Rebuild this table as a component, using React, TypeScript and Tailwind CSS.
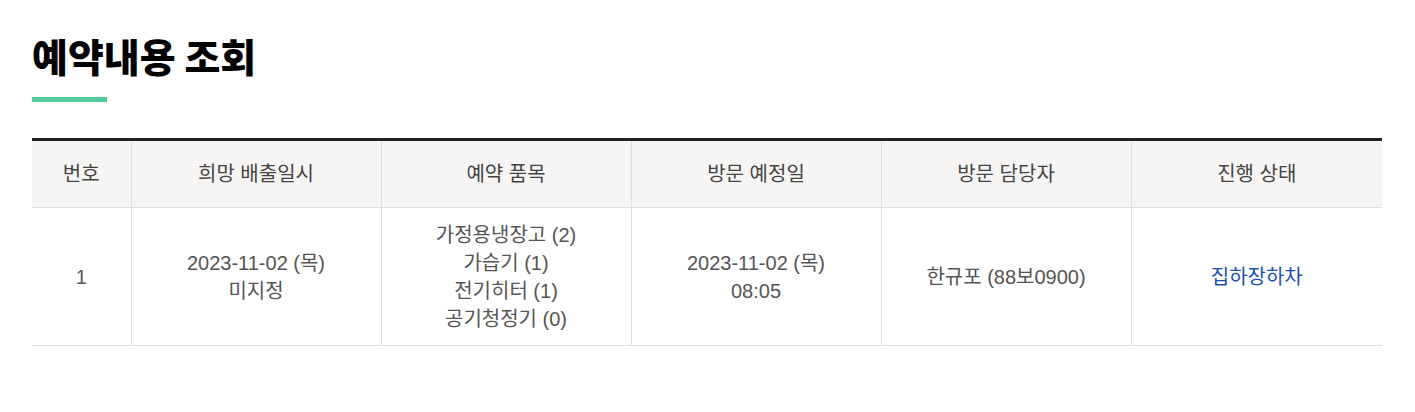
const columns = ['번호', '희망 배출일시', '예약 품목', '방문 예정일', '방문 담당자', '진행 상태'];

const items = ['가정용냉장고 (2)', '가습기 (1)', '전기히터 (1)', '공기청정기 (0)'];

const App = () => {
  return (
    <div
      className="min-h-screen bg-white px-8 pt-[29px]"
      style={{ fontFamily: '"Liberation Sans", "Noto Sans CJK KR", sans-serif' }}
    >
      <h2
        className="text-[39px] leading-[52px] font-black text-black"
        style={{ fontFamily: '"Noto Sans CJK KR", sans-serif' }}
      >
        예약내용 조회
      </h2>
      <div className="mt-[16px] h-[5px] w-[75px] bg-[#52cc9a]" />

      <table className="mt-[36px] w-[1350px] table-fixed border-collapse border-t-[3px] border-[#222] text-[20px]">
        <colgroup>
          <col className="w-[99px]" />
          <col className="w-[250px]" />
          <col className="w-[250px]" />
          <col className="w-[250px]" />
          <col className="w-[250px]" />
          <col className="w-[251px]" />
        </colgroup>
        <thead>
          <tr className="bg-[#f6f5f3] h-[68px]">
            {columns.map((c, i) => (
              <th
                key={c}
                className={`font-normal text-[#444] border-b border-[#ddd] ${i > 0 ? 'border-l' : ''}`}
              >
                {c}
              </th>
            ))}
          </tr>
        </thead>
        <tbody>
          <tr className="h-[138px] text-[#555] text-center leading-[28px]">
            <td className="border-b border-[#ddd]">1</td>
            <td className="border-b border-l border-[#ddd]">
              2023-11-02 (목)
              <br />
              미지정
            </td>
            <td className="border-b border-l border-[#ddd]">
              {items.map((it) => (
                <div key={it}>{it}</div>
              ))}
            </td>
            <td className="border-b border-l border-[#ddd]">
              2023-11-02 (목)
              <br />
              08:05
            </td>
            <td className="border-b border-l border-[#ddd]">한규포 (88보0900)</td>
            <td className="border-b border-l border-[#ddd]">
              <span className="text-[#1a4fb3]">집하장하차</span>
            </td>
          </tr>
        </tbody>
      </table>
    </div>
  );
};

export default App;
